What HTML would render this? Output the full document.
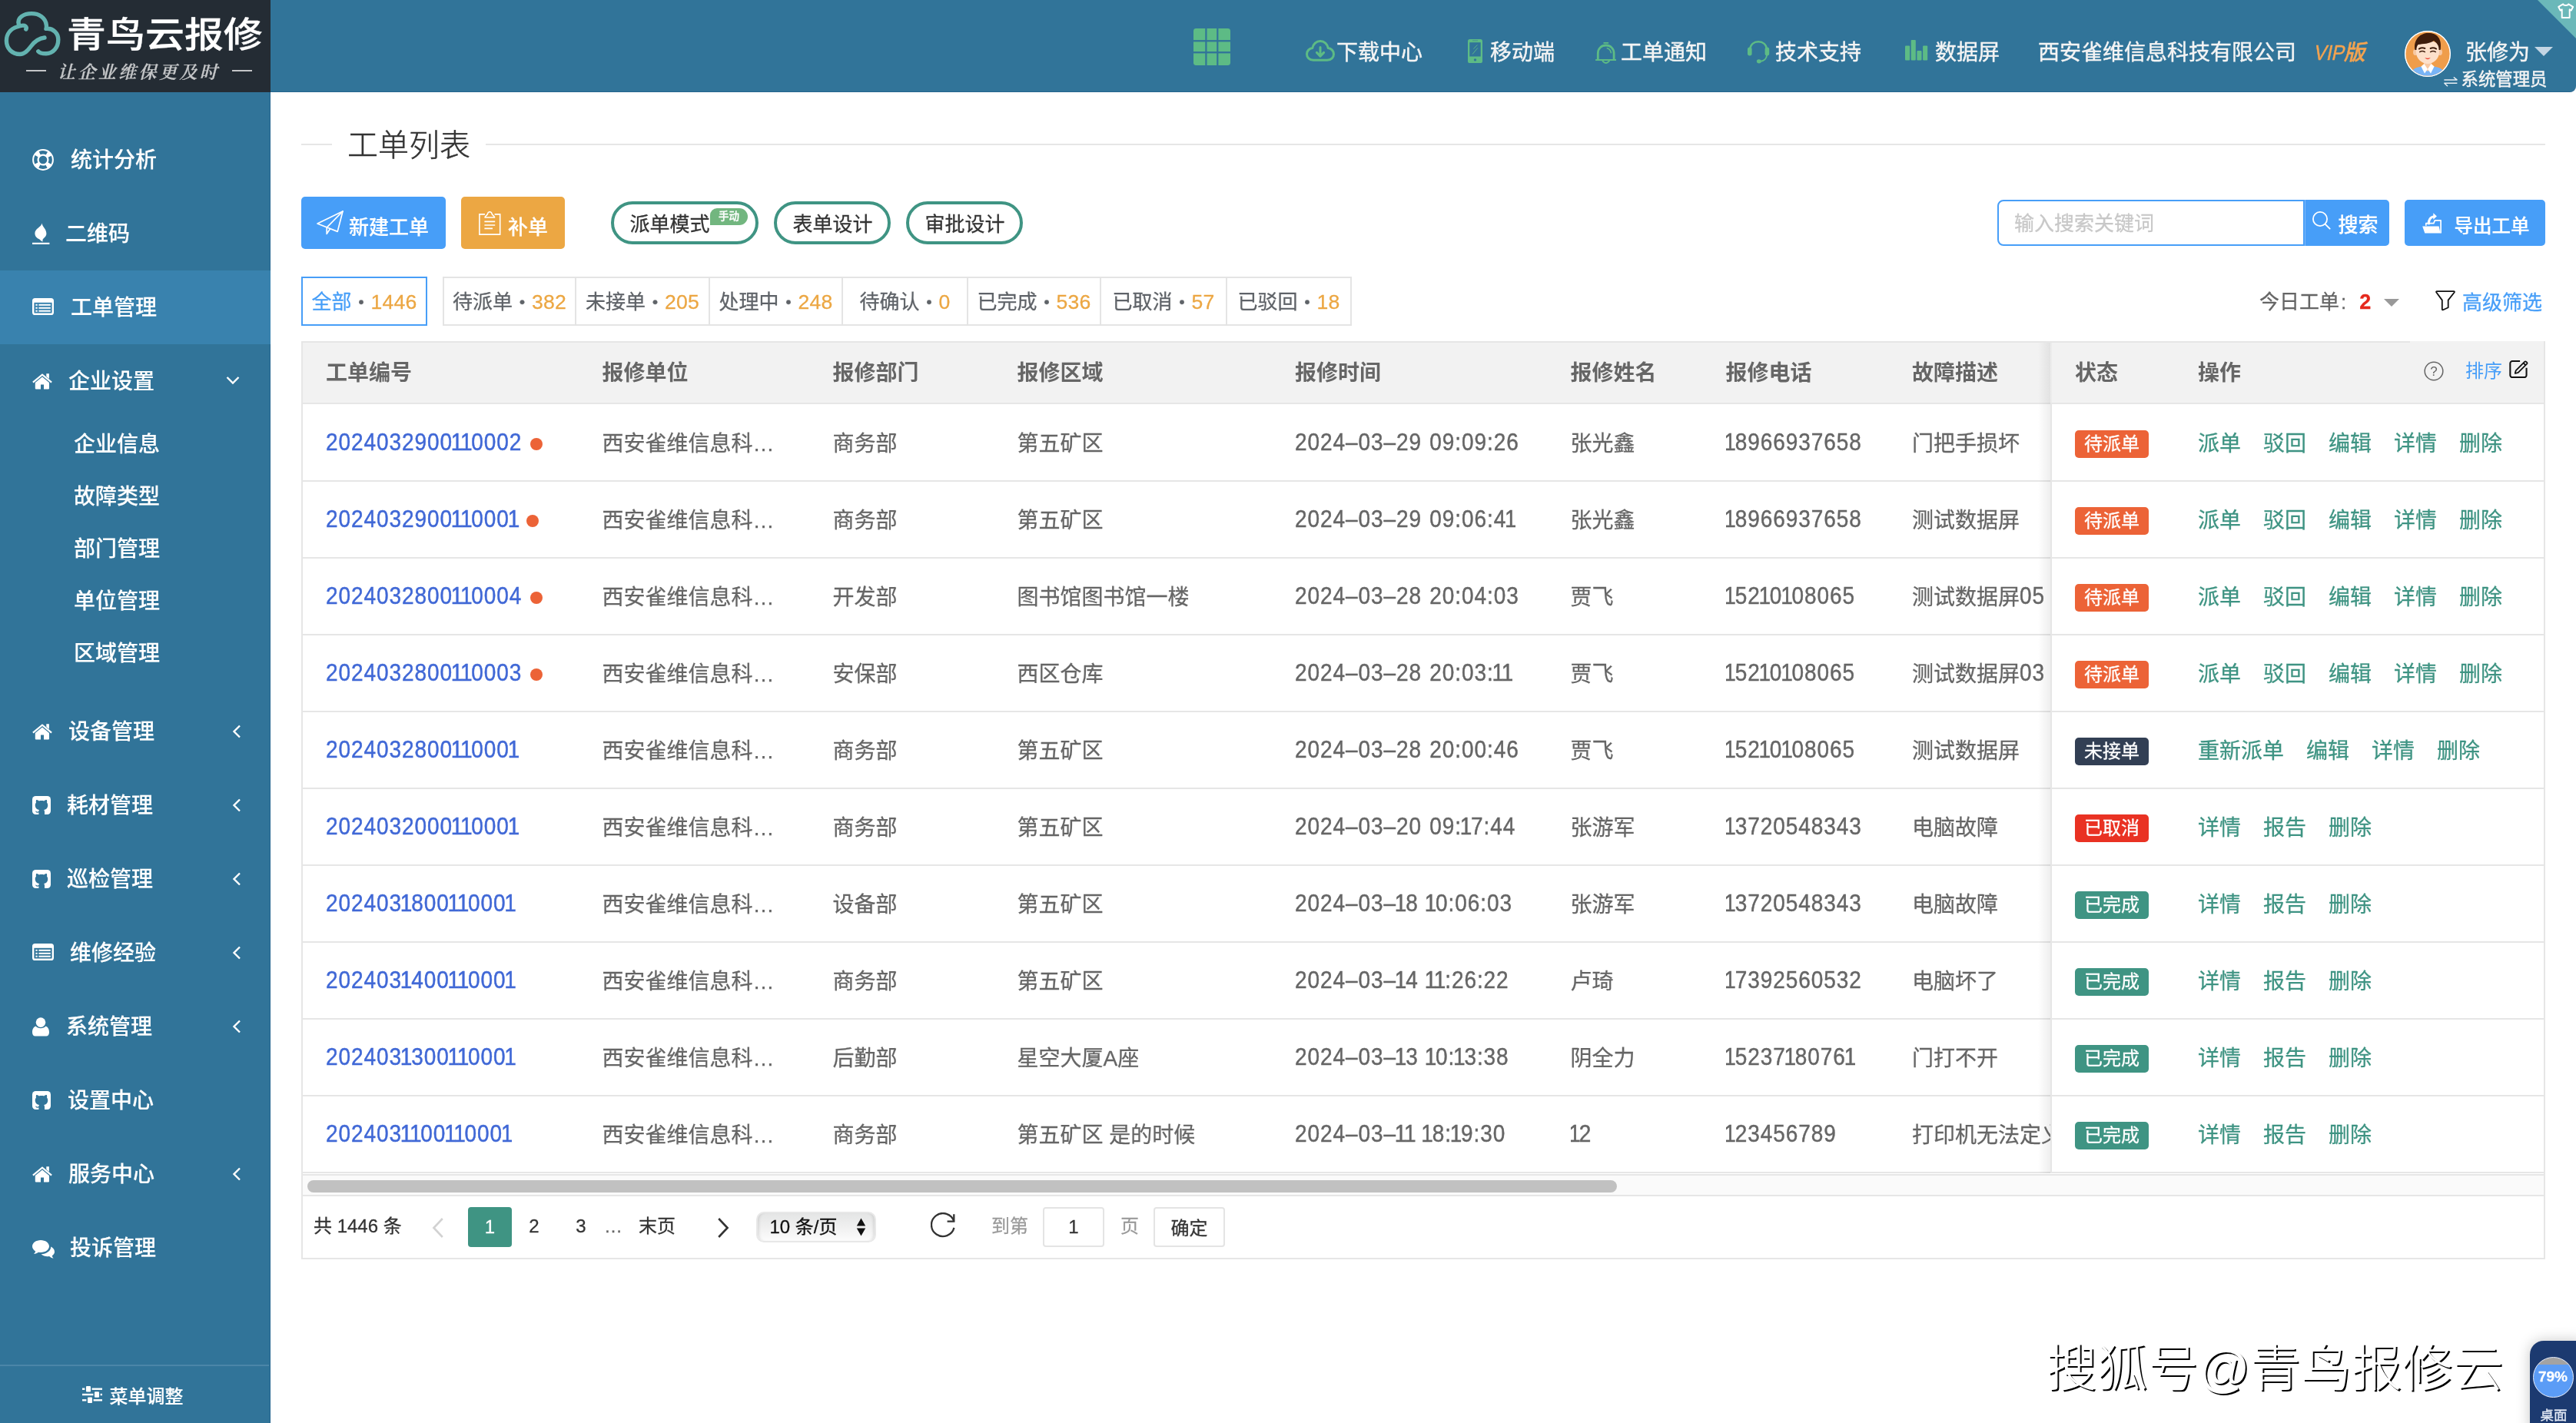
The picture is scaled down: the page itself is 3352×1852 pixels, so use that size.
<!DOCTYPE html>
<html lang="zh-CN">
<head>
<meta charset="utf-8">
<title>青鸟云报修 - 工单列表</title>
<style>
*{box-sizing:border-box;margin:0;padding:0}
html,body{width:3352px;height:1852px;overflow:hidden;background:#fff}
body{-webkit-text-stroke-width:.28px;font-family:"Liberation Sans","Noto Sans CJK SC",sans-serif;color:#666;-webkit-font-smoothing:antialiased}
a{text-decoration:none;color:inherit}
i,em,b{font-style:normal;font-weight:normal}
svg{display:block}
#app{position:relative;width:3352px;height:1852px;overflow:hidden;background:#fff;will-change:transform}
#app div,#app span,#app i{position:absolute;white-space:nowrap}
#app span>span,#app .btn>span,#app .pill>span,#app .tab>span,#app .tab>b,#app .tab>em,#app .today>*,#app .adv>*,#app .sdfoot>*{position:static}

/* header */
#hd{-webkit-text-stroke-width:.42px;left:352px;top:0;width:3000px;height:120px;background:#317499;border-bottom:1px solid #24648e;border-bottom-right-radius:8px;overflow:hidden}
#hd .hgrid{left:1201px;top:37px}
#hd .hi{top:48px}
#hd .ht{top:0;height:120px;line-height:137px;font-size:28px;color:#f4f4f4;margin-left:-352px}
#hd .hi{margin-left:-352px}
#hd .vip{left:2659.500px;top:0;line-height:137px;font-size:28px;color:#f3a350;font-weight:500;transform:skewX(-12deg)}
#hd .vip i{position:static;display:inline-block;font-size:27.5px;transform:scaleX(.9);transform-origin:0 50%;margin-right:-4.500px;font-weight:400}
#hd .avatar{left:2777px;top:40px;width:60px;height:60px;border-radius:50%;overflow:hidden;background:#fff}
#hd .uname{left:2856px;top:0;line-height:137px;font-size:28px;color:#f4f4f4}
#hd .ucaret{left:2946px;top:61px;border-left:12px solid transparent;border-right:12px solid transparent;border-top:12px solid #c3d5e4}
#hd .urole{left:2850.500px;top:89px;line-height:30px;font-size:22.400px;color:#f4f4f4}
#hd .sw{left:2827.500px;top:99.500px}
#hd .corner{right:0;top:0;width:0;height:0;border-top:50px solid #6bb8b9;border-left:50px solid transparent}
#hd .shirt{left:2976px;top:4.400px}

/* logo */
#logo{left:0;top:0;width:352px;height:120px;background:#242c34}
#logo .lcloud{left:0;top:0}
#logo .lname{left:86.6px;top:15px;font-size:46px;line-height:60px;font-weight:500;color:#fff;transform:scaleX(1.108);transform-origin:0 0}
#logo .ltag{font-weight:600;left:75px;top:78px;font-family:"Noto Serif CJK SC","Liberation Serif",serif;font-size:23px;line-height:30px;color:#c4c6c8;letter-spacing:3.4px;font-style:italic}
#logo .ld{top:12.5px;width:26px;height:2px;background:#c4c6c8}
#logo .ld.l{left:-41px}#logo .ld.r{left:227px}

/* sidebar */
#sd{-webkit-text-stroke-width:.12px;left:0;top:120px;width:352px;height:1732px;background:#317499;border-right:1px solid #24648e}
#sd .mi{left:0;width:350px;height:96px;margin-top:-120px}
#sd .mi.act{background:#3982ae;width:352px}
#sd .mi .ic{top:36px}
#sd .mi .ic.h{top:38px}
#sd .mi .ic.l{top:36px}
#sd .mi .ic.r{top:34px}
#sd .mi .ic.f{top:34px}
#sd .mi .ic.c{top:37.500px}
#sd .mi .tx{top:1px;line-height:96px;font-size:28px;color:#fff;font-weight:500}
#sd .mi .arr{top:41px}
#sd .mi .arr.l{top:38.500px;margin-left:1.500px}
#sd .si{left:96px;height:68px;line-height:69px;font-size:28px;color:#fff;margin-top:-120px;font-weight:500}
#sd .sdfoot{left:0;top:1656px;width:350px;height:76px;border-top:2px solid #4b86a8;display:flex;align-items:center;justify-content:center;font-size:24px;color:#fff;font-weight:500}
#sd .sdfoot .ic{margin-right:10px}
#sd .sdfoot{padding-right:5px}

/* title */
.ttl-line{top:187px;height:2px;background:#e6e6e6}
.ttl-line.l{left:392px;width:40px}.ttl-line.r{left:632px;width:2680px}
.ttl{left:452px;top:161px;font-size:40px;line-height:56px;color:#333;font-weight:300;-webkit-text-stroke-width:.5px}

/* buttons */
.btn{display:flex;align-items:center;color:#fff;font-size:26px;font-weight:500;border-radius:5px;-webkit-text-stroke-width:.2px}
.btn .bi{margin-right:7px}
.b-new{left:392px;top:256px;width:188px;height:68px;background:#479ef8;padding-left:20px}
.b-new>span:last-child,.b-add>span:last-child{padding-top:7px}
.b-add{left:600px;top:256px;width:135px;height:68px;background:#eca743;padding-left:23px}
.b-add .bi{margin-right:9px}
.pill{top:262px;height:56px;border:4px solid #3f9483;border-radius:28px;font-size:26px;color:#333;line-height:48px;padding-left:20.500px;padding-top:1.500px}
.pill .tag{left:125.300px;top:4.700px;height:22.200px;width:48.500px;background:#72b67f;color:#fff;font-size:13.500px;font-weight:500;line-height:21px;text-align:center;border-radius:9px 11px 11px 0}
.sinput{left:2599px;top:260px;width:400px;height:60px;border:2px solid #479ef8;border-radius:8px 0 0 8px;font-size:26px;line-height:58px;color:#c8c8c8;padding-left:20px}
.b-search{left:2999px;top:260px;width:110px;height:60px;background:#479ef8;border-radius:0 5px 5px 0;padding-left:9px;padding-top:0;border-left:1px solid #7db9fa}
.b-search .bi{margin-right:9.500px;margin-top:-5.500px}
.b-exp{left:3129px;top:260px;width:183px;height:60px;background:#479ef8;padding-left:23px;padding-top:0;font-size:24.500px}
.b-exp .bi{margin-right:16.500px}
.b-exp>span:last-child{padding-top:4px}

/* tabs */
.tab{top:360px;height:64px;border:2px solid #e4e4e4;font-size:26px;line-height:59px;color:#5f6368;text-align:center}
.tab b{margin:0 .5px;font-weight:500;font-family:"Noto Sans CJK SC",sans-serif;font-size:24px}
.tab em{color:#eca743;font-size:26.600px;letter-spacing:.2px}
.tab.on{border-color:#479ef8;color:#479ef8}
.tab.on b{color:#5f6368}
.today{left:2940px;top:373.200px;font-size:26px;line-height:40px;color:#666}
.today b{color:#e5281c;font-weight:700;margin-left:17px;font-size:27px}
.today .caret{display:inline-block;margin-left:17px;vertical-align:3px;border-left:10px solid transparent;border-right:10px solid transparent;border-top:10px solid #999}
.adv{left:3167.500px;top:373.500px;font-size:26px;line-height:40px;color:#479ef8;display:flex;align-items:center}
.adv .fi{margin-right:9.500px;margin-top:-4.500px;margin-left:1px}

/* table */
#tb{left:392px;top:444px;width:2920px;height:1195px;border:2px solid #e6e6e6;overflow:hidden}
#tb .th{left:0;top:0;width:2916px;height:80px;background:#f2f2f2;border-bottom:2px solid #e6e6e6;font-weight:700;font-size:28px;color:#666}
#tb .tr{left:0;width:2916px;height:100px;border-bottom:2px solid #e6e6e6;font-size:28px;color:#666;margin-top:-446px}
#tb .td{top:0;line-height:104.500px;height:98px;overflow:hidden}
#tb .th .td{line-height:80px;height:78px}
#tb .th{-webkit-text-stroke-width:0}
.c1{left:30px}.c2{left:389.500px}.c3{left:689.500px}.c4{left:929.500px}.c5{left:1291px}.c6{left:1649.500px}.c7{left:1851.500px}.c8{left:2094px;width:182px}
#tb .tr .c5{letter-spacing:.93px;word-spacing:1.500px}
#tb .tr .c7{letter-spacing:.93px}
#tb .tr .num i,#tb .no i{position:static;margin:0 -2.200px}
#tb .tr .num,#tb .no{-webkit-text-stroke-width:.42px}
#tb .tr .dg{position:static;display:inline-block;letter-spacing:.93px;transform:translateY(-2px) scaleY(1.11);-webkit-text-stroke-width:.42px}
#tb .tr .num{transform:translateY(-2px) scaleY(1.11)}
#tb .no{color:#4068d6;letter-spacing:0.93px;display:inline-block;transform:translateY(-2px) scaleY(1.11)}
#tb .dot{display:inline-block;position:static;width:16px;height:16px;border-radius:50%;background:#ec6337;margin-left:10.500px;vertical-align:1.400px}
#tb .fx{left:2274px;top:0;width:642px;height:99px;box-shadow:inset 0 1px 0 #e6e6e6;background:#fff;border-left:2px solid #e6e6e6}
#tb .f0 .fx{box-shadow:none}
#tb .th .fx{height:78px;box-shadow:none;background:#f2f2f2;border-left-color:#ececec}
#tb .th .fx .h1{left:30px;line-height:80px}
#tb .th .fx .h2{left:190px;line-height:80px}
#tb .th .fx .q{left:484px;top:23.500px}
#tb .th .fx .sort{left:538px;line-height:73px;font-size:24px;font-weight:400;color:#479ef8}
#tb .th .fx .ed{left:595px;top:21.500px}
#tb .bd{left:30px;top:34px;width:96px;height:36px;border-radius:5px;color:#fff;font-size:24px;line-height:35px;text-align:center}
.b-w{background:#ec6337}.b-n{background:#323f54}.b-c{background:#e93223}.b-d{background:#3f9483}
#tb .ops{left:190px;top:0;line-height:104.500px;color:#3f9483}
#tb .ops a{margin-right:29px}
#tb .fxshadow{left:2258px;top:0;width:16px;height:1081px;background:linear-gradient(to right,rgba(0,0,0,0),rgba(0,0,0,0.065))}
#tb .sbar{left:0;top:1082px;width:2916px;height:29px;background:#fafafa;border-top:2px solid #e6e6e6;border-bottom:2px solid #e6e6e6}
#tb .sbar i{left:6px;top:6px;width:1704px;height:16px;border-radius:8px;background:#c1c1c1}
#tb .pg{left:0;top:1111px;width:2916px;height:80px;font-size:24px;color:#333}
#tb .pg>span{top:0;line-height:78px}
.pg .tot{left:14px}
.pg .pv{left:168px;top:26.800px !important}
.pg .cur{left:215px;top:14px !important;width:57px;height:52px;line-height:52px !important;background:#3f9483;color:#fff;border-radius:4px;text-align:center}
.pg .pn{width:40px;text-align:center}
.pg .el{left:392px;color:#666}
.pg .last{left:437px}
.pg .nx{left:539.300px;top:26.800px !important}
.pg .sel{left:589.500px;top:20px !important;width:156px;height:40px;line-height:36px !important;border-radius:10px;border:2px solid #e8e8e8;background:linear-gradient(#e4e5e5,#f1f1f1 55%,#fcfcfc);color:#111;padding-left:16px;box-shadow:inset 4px 0 4px -3px rgba(0,0,0,.14),inset -4px 0 4px -3px rgba(0,0,0,.14)}
.pg .sel .ud{left:128.500px;top:6px}
.pg .rf{left:816.500px;top:21px !important}
.pg .go1{left:896px;color:#999}
.pg .gin{left:963px;top:14px !important;width:80px;height:52px;line-height:48px !important;border:2px solid #e4e4e4;border-radius:4px;text-align:center;color:#333}
.pg .go2{left:1064px;color:#999}
.pg .gok{left:1107px;top:14px !important;width:93px;height:52px;line-height:51px !important;border:2px solid #e4e4e4;border-radius:4px;text-align:center;color:#333}

/* watermark + desk widget */
.wm{left:2662.500px;top:1739px;font-size:66px;-webkit-text-stroke-width:0;line-height:84px;font-weight:300;color:#fff;text-shadow:2.100px 2.100px 0 #000;letter-spacing:0}
.desk{left:3292px;top:1745px;width:70px;height:120px;border-radius:18px 0 0 0;background:#1c3a70;box-shadow:0 0 18px rgba(0,0,0,.22)}
.desk .pc{left:3.500px;top:20.500px;width:53px;height:53px;border:1.500px solid #e8eefc;border-radius:50%;background:linear-gradient(#a3a3a3 0,#a3a3a3 18%,#5b9cf6 18%);color:#fff;font-weight:700;font-size:19px;line-height:50px;text-align:center}
.desk .dt{left:13.500px;top:83px;font-size:17.500px;line-height:28px;color:#e3e9f5}

.today u{text-decoration:none;margin-left:2px}
.thcover{left:3136px;top:444px;width:174px;height:2px;background:#f2f2f2}

</style>
</head>
<body>
<div id="app">

<!-- ===== header ===== -->
<div id="hd">
  <span class="hgrid"><svg width="48" height="48" viewBox="0 0 48 48" ><rect x="0" y="0" width="48" height="48" rx="3.4" fill="#5dbb85"/><g fill="#317499"><rect x="15.3" y="0" width="2.2" height="48"/><rect x="30.2" y="0" width="2.200" height="48"/><rect x="0" y="15.100" width="48" height="2.300"/><rect x="0" y="30.100" width="48" height="2.300"/></g></svg></span>
  <span class="hi" style="left:1699px;top:52px"><svg width="38" height="28" viewBox="0 0 38 28" ><path d="M10 26.300 C4.600 26.300 1.500 22.600 1.500 18.500 C1.500 14.300 4.600 11 8.800 10.600 C9.600 5.400 13.800 1.500 19 1.500 C24.200 1.500 28.400 5.400 29.200 10.600 C33.400 11 36.500 14.300 36.500 18.500 C36.500 22.600 33.400 26.300 28 26.300 Z" fill="none" stroke="#5dbb85" stroke-width="3" stroke-linejoin="round"/><path d="M19 9.400 V20 M14.400 16.400 L19 21.200 L23.600 16.400" fill="none" stroke="#5dbb85" stroke-width="3" stroke-linecap="round" stroke-linejoin="round"/></svg></span><span class="ht" style="left:1739px">下载中心</span>
  <span class="hi" style="left:1910px;top:51px"><svg width="19" height="31" viewBox="0 0 19 31" ><rect x="0" y="0" width="19" height="31" rx="2.600" fill="#5dbb85"/><rect x="2.300" y="4.200" width="14.400" height="18.300" fill="#317499"/><circle cx="9.500" cy="26.900" r="1.700" fill="#317499"/><rect x="6" y="1.400" width="7" height="0.900" fill="#317499" opacity=".55"/><path d="M6 19.600 L12.800 11.400 M7.400 12.600 L12.400 7.400" stroke="#5dbb85" stroke-width="0.900" fill="none"/></svg></span><span class="ht" style="left:1939px">移动端</span>
  <span class="hi" style="left:2076px;top:54.800px"><svg width="27" height="28" viewBox="0 0 27 28" ><path d="M3.300 23 V14.400 C3.300 8.200 7.800 4 13.700 4 C19.600 4 24.100 8.200 24.100 14.400 V23" fill="none" stroke="#5dbb85" stroke-width="2.800"/><path d="M1 23 H26.400" stroke="#5dbb85" stroke-width="2.200" stroke-linecap="round"/><path d="M11.200 0.900 H16.400" stroke="#5dbb85" stroke-width="1.800" stroke-linecap="round"/><path d="M9.600 24.600 Q13.700 29.200 17.800 24.600" stroke="#5dbb85" stroke-width="2" fill="none" stroke-linecap="round"/><path d="M15.400 7.800 C18.200 8.800 20 11 20.300 13.600" stroke="#5dbb85" stroke-width="1.600" fill="none" stroke-linecap="round"/></svg></span><span class="ht" style="left:2109px">工单通知</span>
  <span class="hi" style="left:2274px;top:52.500px"><svg width="29" height="30" viewBox="0 0 29 30" ><path d="M3.400 11 C3.400 5 8.200 1.300 14.100 1.300 C20 1.300 24.800 5 24.800 11" fill="none" stroke="#5dbb85" stroke-width="2.400"/><rect x="0" y="8.400" width="5.600" height="11" rx="2.700" fill="#5dbb85"/><rect x="22.600" y="8.400" width="5.600" height="11" rx="2.700" fill="#5dbb85"/><path d="M25 19 C24.600 23.600 21 26.400 16 27" fill="none" stroke="#5dbb85" stroke-width="1.900"/><ellipse cx="14.800" cy="26.800" rx="3" ry="2.600" fill="#5dbb85"/></svg></span><span class="ht" style="left:2310px">技术支持</span>
  <span class="hi" style="left:2479px;top:52.300px"><svg width="30" height="27" viewBox="0 0 30 27" ><g fill="#5dbb85"><rect x="0" y="7.600" width="6.100" height="18.800" rx="1"/><rect x="7.700" y="0" width="6.100" height="26.400" rx="1"/><rect x="15.400" y="13.900" width="6.100" height="12.500" rx="1"/><rect x="23.100" y="7.600" width="6.100" height="18.800" rx="1"/></g></svg></span><span class="ht" style="left:2518px">数据屏</span>
  <span class="ht" style="left:2652px">西安雀维信息科技有限公司</span>
  <span class="vip"><i>VIP</i>版</span>
  <span class="avatar"><svg width="60" height="60" viewBox="0 0 60 60" ><circle cx="30" cy="30" r="30" fill="#fff"/><circle cx="30" cy="30" r="28.6" fill="#ef9d4b"/><clipPath id="avc"><circle cx="30" cy="30" r="28.6"/></clipPath><g clip-path="url(#avc)"><path d="M5 62 C6 50 16 46 30 46 C44 46 54 50 55 62Z" fill="#79b4f6"/><path d="M25 40 h10 v8 l-5 5 l-5 -5z" fill="#f7c9a4"/><path d="M21.4 46.6 L25.4 43 L30 50 L26 55.4Z" fill="#fff"/><path d="M38.6 46.6 L34.600 43 L30 50 L34 55.4Z" fill="#fff"/><ellipse cx="14" cy="28" rx="3" ry="4" fill="#f7c9a4"/><ellipse cx="46" cy="28" rx="3" ry="4" fill="#f7c9a4"/><path d="M15 22 C15 10 45 10 45 22 V28 C45 36 38 43 30 43 C22 43 15 36 15 28Z" fill="#fde0ca"/><path d="M13.4 25 C11 10 22 2.600 31 3 C42 3 49 10 46.6 25 L44.6 25 C44.6 19 42 16 38 13 C33 17 24 17 17.6 18 C16 20 15.4 22 15.4 25Z" fill="#3f1d0c"/><path d="M18.800 23.600 Q22.600 21.400 26.400 23" stroke="#3f1d0c" stroke-width="1.900" fill="none" stroke-linecap="round"/><path d="M33.600 23 Q37.400 21.400 41.200 23.600" stroke="#3f1d0c" stroke-width="1.900" fill="none" stroke-linecap="round"/><path d="M19.600 27.600 Q23 25.400 26.400 27.600" stroke="#3f1d0c" stroke-width="1.400" fill="none" stroke-linecap="round"/><path d="M33.600 27.600 Q37 25.400 40.400 27.600" stroke="#3f1d0c" stroke-width="1.400" fill="none" stroke-linecap="round"/><path d="M26.200 35 Q30 36.600 33.800 35 Q30 39.600 26.200 35Z" fill="#ee4638"/></g></svg></span>
  <span class="uname">张修为</span><i class="ucaret"></i>
  <span class="sw"><svg width="18" height="13" viewBox="0 0 18 13" ><path d="M0.400 3.900 H17 L12.800 0.500 M17.400 8.300 H0.800 L5 12.300" fill="none" stroke="#e8eef3" stroke-width="1.500" stroke-linejoin="round"/></svg></span><span class="urole">系统管理员</span>
  <span class="corner"></span><span class="shirt"><svg width="21.4" height="20.6" viewBox="0 0 24 21" preserveAspectRatio="none"><path d="M8 1.4 C9 3.6 15 3.6 16 1.4 L22.6 5 L20 9.6 L17.6 8.6 V19.4 H6.4 V8.6 L4 9.6 L1.4 5 Z" fill="none" stroke="#fff" stroke-width="2.2" stroke-linejoin="round"/></svg></span>
</div>

<!-- ===== logo ===== -->
<div id="logo">
  <span class="lcloud"><svg width="90" height="90" viewBox="0 0 90 90" ><g fill="none" stroke="#63b3b0" stroke-linecap="round" stroke-linejoin="round"><path d="M58 49 C50 50 45 54 40.500 60 C36 66 32 70.500 26 70.500 C15.500 70.500 8.400 63 8.400 53 C8.400 44 14 37.500 22 35 C26 33.500 30.500 32 33 34 C34.600 35.400 34.400 37 33.800 38" stroke-width="5.4"/><path d="M24.400 31.500 C22 23 31 17.600 41 17.600 C51 17.600 59.500 23 60.400 33 C60.600 35 60.400 36.400 60 37.400 C69 36.400 75.800 43 75.800 51.500 C75.800 62 69 69.800 60 69.800 C55.500 69.800 51.500 69 49.800 66.800" stroke-width="5.400"/></g></svg></span>
  <span class="lname">青鸟云报修</span>
  <span class="ltag"><i class="ld l"></i>让企业维保更及时<i class="ld r"></i></span>
</div>

<!-- ===== sidebar ===== -->
<div id="sd">
<div class="mi" style="top:160px"><span class="ic r" style="left:42px"><svg width="28" height="28" viewBox="0 0 28 28" ><circle cx="14" cy="14" r="9.6" fill="none" stroke="#fff" stroke-width="8.6"/><circle cx="14" cy="14" r="9.7" fill="none" stroke="#317499" stroke-width="4.4" stroke-dasharray="9.6 5.64" stroke-dashoffset="4.8"/></svg></span><span class="tx" style="left:92px">统计分析</span></div>
<div class="mi" style="top:256px"><span class="ic f" style="left:42px"><svg width="23" height="28" viewBox="0 0 23 28" ><path d="M12.6 0.4 C13 5 18.4 8 18.4 14 C18.4 18.6 14.2 19.4 13.4 22.6 C13.2 23.4 13.6 23.8 14 24.2 C11 24 10.6 22 9.4 21.4 C6 19.8 3.4 17.6 3.4 13.4 C3.4 7.4 11.6 5.6 12.6 0.4 Z" fill="#fff"/><rect x="0" y="25.8" width="22.4" height="2.2" fill="#fff"/></svg></span><span class="tx" style="left:85px">二维码</span></div>
<div class="mi act" style="top:352px"><span class="ic l" style="left:42px"><svg width="28" height="22" viewBox="0 0 28 22" ><rect x="1.2" y="1.2" width="25.6" height="19.6" rx="2.4" fill="none" stroke="#fff" stroke-width="2.4"/><rect x="1.2" y="1.2" width="25.6" height="4.6" fill="#fff"/><g fill="#fff"><rect x="4.4" y="7.8" width="2.3" height="2"/><rect x="8.4" y="7.8" width="15.4" height="2"/><rect x="4.4" y="11.8" width="2.3" height="2"/><rect x="8.4" y="11.8" width="15.4" height="2"/><rect x="4.4" y="15.7" width="2.3" height="2"/><rect x="8.4" y="15.7" width="15.4" height="2"/></g></svg></span><span class="tx" style="left:92px">工单管理</span></div>
<div class="mi" style="top:448px"><span class="ic h" style="left:42px"><svg width="26" height="21" viewBox="0 0 26 21" ><path d="M13 0.2 L25.8 10.8 L24.4 12.5 L13 3.1 L1.600 12.5 L0.2 10.8 Z" fill="#fff"/><path d="M18.3 0.2 h3.600 v6.9 l-3.600 -3z" fill="#fff"/><path d="M13 4.600 L22 12 V19.600 a0.8 0.8 0 0 1 -0.8 0.8 H15 V14.400 H11 V20.400 H4.600 a0.8 0.8 0 0 1 -0.8 -0.8 V12 Z" fill="#fff"/></svg></span><span class="tx" style="left:89px">企业设置</span><span class="arr" style="left:294px"><svg width="18" height="12" viewBox="0 0 18 12" ><path d="M1.5 2 L9 9.5 L16.5 2" fill="none" stroke="#fff" stroke-width="2.4"/></svg></span></div>
<div class="si" style="top:544px">企业信息</div>
<div class="si" style="top:612px">故障类型</div>
<div class="si" style="top:680px">部门管理</div>
<div class="si" style="top:748px">单位管理</div>
<div class="si" style="top:816px">区域管理</div>
<div class="mi" style="top:904px"><span class="ic h" style="left:42px"><svg width="26" height="21" viewBox="0 0 26 21" ><path d="M13 0.2 L25.8 10.8 L24.4 12.5 L13 3.1 L1.600 12.5 L0.2 10.8 Z" fill="#fff"/><path d="M18.3 0.2 h3.600 v6.9 l-3.600 -3z" fill="#fff"/><path d="M13 4.600 L22 12 V19.600 a0.8 0.8 0 0 1 -0.8 0.8 H15 V14.400 H11 V20.400 H4.600 a0.8 0.8 0 0 1 -0.8 -0.8 V12 Z" fill="#fff"/></svg></span><span class="tx" style="left:89px">设备管理</span><span class="arr l" style="left:300px"><svg width="12" height="18" viewBox="0 0 12 18" ><path d="M10 1.5 L2.5 9 L10 16.5" fill="none" stroke="#fff" stroke-width="2.4"/></svg></span></div>
<div class="mi" style="top:1000px"><span class="ic" style="left:42px"><svg width="24" height="24" viewBox="0 0 24 24" ><rect x="0" y="0" width="24" height="24" rx="4.5" fill="#fff"/><path d="M5.2 5 C6.6 5 7.8 5.6 8.8 6.4 C10.8 5.9 13.2 5.9 15.2 6.4 C16.2 5.6 17.4 5 18.8 5 C19.3 6.3 19.3 7.6 19 8.6 C20 9.8 20.4 11.2 20.2 13 C19.8 16.2 17.8 17.6 15.2 17.9 C15.8 18.6 16 19.4 16 20.4 V24 H8.4 V21.6 C6 22.2 4.6 21 4 19.4 C5 19.6 5.6 20.2 6.4 20.4 C7.2 20.6 8 20.4 8.4 20 C8.4 19.2 8.6 18.5 9 17.9 C6.2 17.6 4.2 16.2 3.8 13 C3.6 11.2 4 9.8 5 8.6 C4.7 7.6 4.7 6.3 5.2 5 Z" fill="#317499"/></svg></span><span class="tx" style="left:87px">耗材管理</span><span class="arr l" style="left:300px"><svg width="12" height="18" viewBox="0 0 12 18" ><path d="M10 1.5 L2.5 9 L10 16.5" fill="none" stroke="#fff" stroke-width="2.4"/></svg></span></div>
<div class="mi" style="top:1096px"><span class="ic" style="left:42px"><svg width="24" height="24" viewBox="0 0 24 24" ><rect x="0" y="0" width="24" height="24" rx="4.5" fill="#fff"/><path d="M5.2 5 C6.6 5 7.8 5.6 8.8 6.4 C10.8 5.9 13.2 5.9 15.2 6.4 C16.2 5.6 17.4 5 18.8 5 C19.3 6.3 19.3 7.6 19 8.6 C20 9.8 20.4 11.2 20.2 13 C19.8 16.2 17.8 17.6 15.2 17.9 C15.8 18.6 16 19.4 16 20.4 V24 H8.4 V21.6 C6 22.2 4.6 21 4 19.4 C5 19.6 5.6 20.2 6.4 20.4 C7.2 20.6 8 20.4 8.4 20 C8.4 19.2 8.6 18.5 9 17.9 C6.2 17.6 4.2 16.2 3.8 13 C3.6 11.2 4 9.8 5 8.6 C4.7 7.6 4.7 6.3 5.2 5 Z" fill="#317499"/></svg></span><span class="tx" style="left:87px">巡检管理</span><span class="arr l" style="left:300px"><svg width="12" height="18" viewBox="0 0 12 18" ><path d="M10 1.5 L2.5 9 L10 16.5" fill="none" stroke="#fff" stroke-width="2.4"/></svg></span></div>
<div class="mi" style="top:1192px"><span class="ic l" style="left:42px"><svg width="28" height="22" viewBox="0 0 28 22" ><rect x="1.2" y="1.2" width="25.6" height="19.6" rx="2.4" fill="none" stroke="#fff" stroke-width="2.4"/><rect x="1.2" y="1.2" width="25.6" height="4.6" fill="#fff"/><g fill="#fff"><rect x="4.4" y="7.8" width="2.3" height="2"/><rect x="8.4" y="7.8" width="15.4" height="2"/><rect x="4.4" y="11.8" width="2.3" height="2"/><rect x="8.4" y="11.8" width="15.4" height="2"/><rect x="4.4" y="15.7" width="2.3" height="2"/><rect x="8.4" y="15.7" width="15.4" height="2"/></g></svg></span><span class="tx" style="left:91px">维修经验</span><span class="arr l" style="left:300px"><svg width="12" height="18" viewBox="0 0 12 18" ><path d="M10 1.5 L2.5 9 L10 16.5" fill="none" stroke="#fff" stroke-width="2.4"/></svg></span></div>
<div class="mi" style="top:1288px"><span class="ic" style="left:42px"><svg width="22" height="25" viewBox="0 0 22 25" ><circle cx="11" cy="6.6" r="6.3" fill="#fff"/><path d="M4.5 11.5 C2 12.5 0 15 0 19.5 C0 22.5 1.5 24.6 4 24.6 H18 C20.5 24.6 22 22.5 22 19.5 C22 15 20 12.5 17.5 11.5 C16 13.2 13.6 14.2 11 14.2 C8.4 14.2 6 13.2 4.5 11.5Z" fill="#fff"/></svg></span><span class="tx" style="left:86px">系统管理</span><span class="arr l" style="left:300px"><svg width="12" height="18" viewBox="0 0 12 18" ><path d="M10 1.5 L2.5 9 L10 16.5" fill="none" stroke="#fff" stroke-width="2.4"/></svg></span></div>
<div class="mi" style="top:1384px"><span class="ic" style="left:42px"><svg width="24" height="24" viewBox="0 0 24 24" ><rect x="0" y="0" width="24" height="24" rx="4.5" fill="#fff"/><path d="M5.2 5 C6.6 5 7.8 5.6 8.8 6.4 C10.8 5.9 13.2 5.9 15.2 6.4 C16.2 5.6 17.4 5 18.8 5 C19.3 6.3 19.3 7.6 19 8.6 C20 9.8 20.4 11.2 20.2 13 C19.8 16.2 17.8 17.6 15.2 17.9 C15.8 18.6 16 19.4 16 20.4 V24 H8.4 V21.6 C6 22.2 4.6 21 4 19.4 C5 19.6 5.6 20.2 6.4 20.4 C7.2 20.6 8 20.4 8.4 20 C8.4 19.2 8.6 18.5 9 17.9 C6.2 17.6 4.2 16.2 3.8 13 C3.6 11.2 4 9.8 5 8.6 C4.7 7.6 4.7 6.3 5.2 5 Z" fill="#317499"/></svg></span><span class="tx" style="left:88px">设置中心</span></div>
<div class="mi" style="top:1480px"><span class="ic h" style="left:42px"><svg width="26" height="21" viewBox="0 0 26 21" ><path d="M13 0.2 L25.8 10.8 L24.4 12.5 L13 3.1 L1.600 12.5 L0.2 10.8 Z" fill="#fff"/><path d="M18.3 0.2 h3.600 v6.9 l-3.600 -3z" fill="#fff"/><path d="M13 4.600 L22 12 V19.600 a0.8 0.8 0 0 1 -0.8 0.8 H15 V14.400 H11 V20.400 H4.600 a0.8 0.8 0 0 1 -0.8 -0.8 V12 Z" fill="#fff"/></svg></span><span class="tx" style="left:89px">服务中心</span><span class="arr l" style="left:300px"><svg width="12" height="18" viewBox="0 0 12 18" ><path d="M10 1.5 L2.5 9 L10 16.5" fill="none" stroke="#fff" stroke-width="2.4"/></svg></span></div>
<div class="mi" style="top:1576px"><span class="ic c" style="left:42px"><svg width="29" height="24" viewBox="0 0 29 24" ><path d="M11 0 C17 0 22 3.6 22 8 C22 12.4 17 16 11 16 C10 16 9 15.9 8.1 15.7 C6.5 16.9 4.4 17.8 2 18 C3 17 3.8 15.8 4.2 14.4 C1.6 12.9 0 10.6 0 8 C0 3.6 5 0 11 0Z" fill="#fff"/><path d="M24.3 8.6 C24.3 14 18.6 18.2 11.6 18.3 C13.6 20.2 16.6 21.3 19.6 21.3 C20.4 21.3 21.2 21.2 22 21.1 C23.4 22.3 25.2 23.4 27.6 23.8 C26.8 22.9 26 21.6 25.8 20.3 C27.8 19 29 17.2 29 15.2 C29 12.4 27 10 24.3 8.6Z" fill="#fff"/></svg></span><span class="tx" style="left:91px">投诉管理</span></div>
  <div class="sdfoot"><span class="ic"><svg width="26" height="22" viewBox="0 0 26 22" ><g fill="#fff"><rect x="0" y="2.5" width="26" height="2.4"/><rect x="0" y="9.8" width="26" height="2.4"/><rect x="0" y="17.1" width="26" height="2.4"/><rect x="5" y="0" width="6" height="7.4" rx="1"/><rect x="16" y="7.3" width="6" height="7.4" rx="1"/><rect x="7" y="14.6" width="6" height="7.4" rx="1"/></g><g fill="#317499"><rect x="3.4" y="2" width="1.6" height="3.4"/><rect x="11" y="2" width="1.6" height="3.4"/><rect x="14.4" y="9.3" width="1.6" height="3.4"/><rect x="22" y="9.3" width="1.6" height="3.4"/><rect x="5.4" y="16.6" width="1.6" height="3.4"/><rect x="13" y="16.6" width="1.6" height="3.4"/></g></svg></span><span>菜单调整</span></div>
</div>

<!-- ===== main ===== -->
<div id="main">
  <div class="ttl-line l"></div><div class="ttl-line r"></div>
  <div class="ttl">工单列表</div>

  <div class="btn b-new"><span class="bi"><svg width="35" height="32" viewBox="0 0 35 32" ><path d="M1 17 L34 1 L27.200 27.400 Z" fill="none" stroke="#fff" stroke-width="1.700" stroke-linejoin="round"/><path d="M34 1 L13.200 22.200 V30.400 L17.400 24" fill="none" stroke="#fff" stroke-width="1.700" stroke-linejoin="round" stroke-linecap="round"/></svg></span><span>新建工单</span></div>
  <div class="btn b-add"><span class="bi"><svg width="29" height="31" viewBox="0 0 29 31" ><path d="M8 3.900 H0.900 V30.100 H27.700 V3.900 H20.600" fill="none" stroke="#fff" stroke-width="1.600"/><path d="M8 8 C8.600 5.600 11.200 5.200 11.600 3 C11.800 1.400 13 0.700 14.300 0.700 C15.600 0.700 16.800 1.400 17 3 C17.400 5.200 20 5.600 20.600 8 Z" fill="none" stroke="#fff" stroke-width="1.500" stroke-linejoin="round"/><path d="M7.400 13.400 H21.200 M7.400 18 H21.200 M7.400 22.400 H18" stroke="#fff" stroke-width="1.600"/></svg></span><span>补单</span></div>
  <div class="pill" style="left:795px;width:192px"><span>派单模式</span><i class="tag">手动</i></div>
  <div class="pill" style="left:1007px;width:152px"><span>表单设计</span></div>
  <div class="pill" style="left:1179px;width:152px"><span>审批设计</span></div>

  <div class="sinput"><span>输入搜索关键词</span></div>
  <div class="btn b-search"><span class="bi"><svg width="24" height="24" viewBox="0 0 24 24" ><circle cx="10" cy="10" r="9.100" fill="none" stroke="#fff" stroke-width="1.800"/><path d="M16.800 16.900 L22.600 22.700" stroke="#fff" stroke-width="1.900" stroke-linecap="round"/></svg></span><span>搜索</span></div>
  <div class="btn b-exp"><span class="bi"><svg width="25" height="27" viewBox="0 0 25 27" ><path d="M0.200 17.500 H21.600 L23.600 26.500 H3.300 Z" fill="#fff"/><path d="M4.800 16.800 V13.700 H14.800 L16.300 9.900 H24.100 V26.500" fill="none" stroke="#fff" stroke-width="1.700" stroke-linejoin="round"/><path d="M6.800 15.200 C6.300 8.600 9.600 4.200 14.300 3.400 V0.200 L18.900 4.500 L14.300 8.700 V6.500 C11.600 7.100 9.700 10.600 9.900 15.200 Z" fill="#fff"/></svg></span><span>导出工单</span></div>

  <div class="tab on" style="left:392px;width:164px"><span>全部</span><b>·</b><em>1446</em></div>
  <div class="tab" style="left:576px;width:174px"><span>待派单</span><b>·</b><em>382</em></div><div class="tab" style="left:748px;width:176px"><span>未接单</span><b>·</b><em>205</em></div><div class="tab" style="left:922px;width:175px"><span>处理中</span><b>·</b><em>248</em></div><div class="tab" style="left:1095px;width:165px"><span>待确认</span><b>·</b><em>0</em></div><div class="tab" style="left:1258px;width:175px"><span>已完成</span><b>·</b><em>536</em></div><div class="tab" style="left:1431px;width:166px"><span>已取消</span><b>·</b><em>57</em></div><div class="tab" style="left:1595px;width:164px"><span>已驳回</span><b>·</b><em>18</em></div>

  <div class="today"><span>今日工单<u>:</u></span><b>2</b><i class="caret"></i></div>
  <div class="adv"><span class="fi"><svg width="26" height="27" viewBox="0 0 26 27" ><path d="M2.200 1.100 H23.800 Q25.600 1.300 24.500 2.800 L16.700 12.600 V22.200 L10.200 25.200 Q8.800 25.600 8.800 24.200 V12.600 L1.500 2.800 Q0.400 1.300 2.200 1.100 Z" fill="none" stroke="#111" stroke-width="1.800" stroke-linejoin="round"/></svg></span><span>高级筛选</span></div>

  <!-- table -->
  <div id="tb">
    <div class="th">
      <span class="td c1">工单编号</span><span class="td c2">报修单位</span><span class="td c3">报修部门</span><span class="td c4">报修区域</span>
      <span class="td c5">报修时间</span><span class="td c6">报修姓名</span><span class="td c7">报修电话</span><span class="td c8">故障描述</span>
      <div class="fx"><span class="h1">状态</span><span class="h2">操作</span><span class="q"><svg width="26" height="26" viewBox="0 0 26 26" ><circle cx="13" cy="13" r="11.800" fill="none" stroke="#666" stroke-width="1.500"/><text x="13" y="19" font-family="Liberation Sans, sans-serif" font-size="17" font-weight="400" stroke="none" text-anchor="middle" fill="#666" style="-webkit-text-stroke-width:0">?</text></svg></span><span class="sort">排序</span><span class="ed"><svg width="25.4" height="24.4" viewBox="0 0 27 26" ><path d="M15 2.200 H4.400 a3 3 0 0 0 -3 3 V21.600 a3 3 0 0 0 3 3 H21 a3 3 0 0 0 3 -3 V11.400" fill="none" stroke="#111" stroke-width="2.200"/><path d="M8.400 18.200 L9.400 15 L21.400 3 a1.600 1.600 0 0 1 2.200 0 l0.900 0.900 a1.600 1.600 0 0 1 0 2.200 L12.500 18.100 L8.400 19.200 Z M19.800 4.800 L22.700 7.700" fill="none" stroke="#111" stroke-width="1.900" stroke-linejoin="round"/></svg></span></div>
    </div>
<div class="tr f0" style="top:526px;height:101px"><span class="td c1"><a class="no">2024032900<i>1</i><i>1</i>0002</a><i class="dot"></i></span><span class="td c2">西安雀维信息科…</span><span class="td c3">商务部</span><span class="td c4">第五矿区</span><span class="td c5 num">2024–03–29 09:09:26</span><span class="td c6">张光鑫</span><span class="td c7 num"><i>1</i>8966937658</span><span class="td c8">门把手损坏</span><div class="fx"><span class="bd b-w">待派单</span><span class="ops"><a>派单</a><a>驳回</a><a>编辑</a><a>详情</a><a>删除</a></span></div></div>
<div class="tr" style="top:626px;height:101px"><span class="td c1"><a class="no">2024032900<i>1</i><i>1</i>000<i>1</i></a><i class="dot"></i></span><span class="td c2">西安雀维信息科…</span><span class="td c3">商务部</span><span class="td c4">第五矿区</span><span class="td c5 num">2024–03–29 09:06:4<i>1</i></span><span class="td c6">张光鑫</span><span class="td c7 num"><i>1</i>8966937658</span><span class="td c8">测试数据屏</span><div class="fx"><span class="bd b-w">待派单</span><span class="ops"><a>派单</a><a>驳回</a><a>编辑</a><a>详情</a><a>删除</a></span></div></div>
<div class="tr" style="top:726px;height:101px"><span class="td c1"><a class="no">2024032800<i>1</i><i>1</i>0004</a><i class="dot"></i></span><span class="td c2">西安雀维信息科…</span><span class="td c3">开发部</span><span class="td c4">图书馆图书馆一楼</span><span class="td c5 num">2024–03–28 20:04:03</span><span class="td c6">贾飞</span><span class="td c7 num"><i>1</i>52<i>1</i>0<i>1</i>08065</span><span class="td c8">测试数据屏<i class="dg">05</i></span><div class="fx"><span class="bd b-w">待派单</span><span class="ops"><a>派单</a><a>驳回</a><a>编辑</a><a>详情</a><a>删除</a></span></div></div>
<div class="tr" style="top:826px;height:101px"><span class="td c1"><a class="no">2024032800<i>1</i><i>1</i>0003</a><i class="dot"></i></span><span class="td c2">西安雀维信息科…</span><span class="td c3">安保部</span><span class="td c4">西区仓库</span><span class="td c5 num">2024–03–28 20:03:<i>1</i><i>1</i></span><span class="td c6">贾飞</span><span class="td c7 num"><i>1</i>52<i>1</i>0<i>1</i>08065</span><span class="td c8">测试数据屏<i class="dg">03</i></span><div class="fx"><span class="bd b-w">待派单</span><span class="ops"><a>派单</a><a>驳回</a><a>编辑</a><a>详情</a><a>删除</a></span></div></div>
<div class="tr" style="top:926px;height:101px"><span class="td c1"><a class="no">2024032800<i>1</i><i>1</i>000<i>1</i></a></span><span class="td c2">西安雀维信息科…</span><span class="td c3">商务部</span><span class="td c4">第五矿区</span><span class="td c5 num">2024–03–28 20:00:46</span><span class="td c6">贾飞</span><span class="td c7 num"><i>1</i>52<i>1</i>0<i>1</i>08065</span><span class="td c8">测试数据屏</span><div class="fx"><span class="bd b-n">未接单</span><span class="ops"><a>重新派单</a><a>编辑</a><a>详情</a><a>删除</a></span></div></div>
<div class="tr" style="top:1026px;height:101px"><span class="td c1"><a class="no">2024032000<i>1</i><i>1</i>000<i>1</i></a></span><span class="td c2">西安雀维信息科…</span><span class="td c3">商务部</span><span class="td c4">第五矿区</span><span class="td c5 num">2024–03–20 09:<i>1</i>7:44</span><span class="td c6">张游军</span><span class="td c7 num"><i>1</i>3720548343</span><span class="td c8">电脑故障</span><div class="fx"><span class="bd b-c">已取消</span><span class="ops"><a>详情</a><a>报告</a><a>删除</a></span></div></div>
<div class="tr" style="top:1126px;height:101px"><span class="td c1"><a class="no">202403<i>1</i>800<i>1</i><i>1</i>000<i>1</i></a></span><span class="td c2">西安雀维信息科…</span><span class="td c3">设备部</span><span class="td c4">第五矿区</span><span class="td c5 num">2024–03–<i>1</i>8 <i>1</i>0:06:03</span><span class="td c6">张游军</span><span class="td c7 num"><i>1</i>3720548343</span><span class="td c8">电脑故障</span><div class="fx"><span class="bd b-d">已完成</span><span class="ops"><a>详情</a><a>报告</a><a>删除</a></span></div></div>
<div class="tr" style="top:1226px;height:101px"><span class="td c1"><a class="no">202403<i>1</i>400<i>1</i><i>1</i>000<i>1</i></a></span><span class="td c2">西安雀维信息科…</span><span class="td c3">商务部</span><span class="td c4">第五矿区</span><span class="td c5 num">2024–03–<i>1</i>4 <i>1</i><i>1</i>:26:22</span><span class="td c6">卢琦</span><span class="td c7 num"><i>1</i>7392560532</span><span class="td c8">电脑坏了</span><div class="fx"><span class="bd b-d">已完成</span><span class="ops"><a>详情</a><a>报告</a><a>删除</a></span></div></div>
<div class="tr" style="top:1326px;height:101px"><span class="td c1"><a class="no">202403<i>1</i>300<i>1</i><i>1</i>000<i>1</i></a></span><span class="td c2">西安雀维信息科…</span><span class="td c3">后勤部</span><span class="td c4">星空大厦A座</span><span class="td c5 num">2024–03–<i>1</i>3 <i>1</i>0:<i>1</i>3:38</span><span class="td c6">阴全力</span><span class="td c7 num"><i>1</i>5237<i>1</i>8076<i>1</i></span><span class="td c8">门打不开</span><div class="fx"><span class="bd b-d">已完成</span><span class="ops"><a>详情</a><a>报告</a><a>删除</a></span></div></div>
<div class="tr" style="top:1426px;height:101px"><span class="td c1"><a class="no">202403<i>1</i><i>1</i>00<i>1</i><i>1</i>000<i>1</i></a></span><span class="td c2">西安雀维信息科…</span><span class="td c3">商务部</span><span class="td c4">第五矿区 是的时候</span><span class="td c5 num">2024–03–<i>1</i><i>1</i> <i>1</i>8:<i>1</i>9:30</span><span class="td c6 num"><i>1</i>2</span><span class="td c7 num"><i>1</i>23456789</span><span class="td c8">打印机无法定义</span><div class="fx"><span class="bd b-d">已完成</span><span class="ops"><a>详情</a><a>报告</a><a>删除</a></span></div></div>
    <div class="fxshadow"></div>
    <div class="sbar"><i></i></div>
    <div class="pg">
      <span class="tot">共 1446 条</span>
      <span class="pv"><svg width="16" height="28" viewBox="0 0 16 28" ><path d="M13.800 2 L2.400 14 L13.800 26" fill="none" stroke="#d2d2d2" stroke-width="2.600"/></svg></span>
      <span class="cur">1</span><span class="pn" style="left:281px">2</span><span class="pn" style="left:342px">3</span>
      <span class="el">…</span><span class="last">末页</span>
      <span class="nx"><svg width="16" height="28" viewBox="0 0 16 28" ><path d="M2.200 2 L13.600 14 L2.200 26" fill="none" stroke="#333" stroke-width="2.600"/></svg></span>
      <span class="sel"><span>10 条/页</span><i class="ud"><svg width="13" height="24" viewBox="0 0 13 24" ><path d="M6.500 0.600 L12.200 10.600 H0.800Z M6.500 23.400 L12.200 13.400 H0.800Z" fill="#111"/></svg></i></span>
      <span class="rf"><svg width="36" height="34" viewBox="0 0 36 34" ><path d="M30.300 11.600 A15 15 0 1 0 30.500 19.900" fill="none" stroke="#333" stroke-width="2.300"/><path d="M30.300 2.200 V11.600 H21.600" fill="none" stroke="#333" stroke-width="2.300"/></svg></span>
      <span class="go1">到第</span><span class="gin">1</span><span class="go2">页</span><span class="gok">确定</span>
    </div>
  </div>

  <div class="thcover"></div>
  <div class="wm">搜狐号@青鸟报修云</div>
  <div class="desk"><span class="pc">79%</span><span class="dt">桌面</span></div>
</div>

</div>
</body>
</html>
